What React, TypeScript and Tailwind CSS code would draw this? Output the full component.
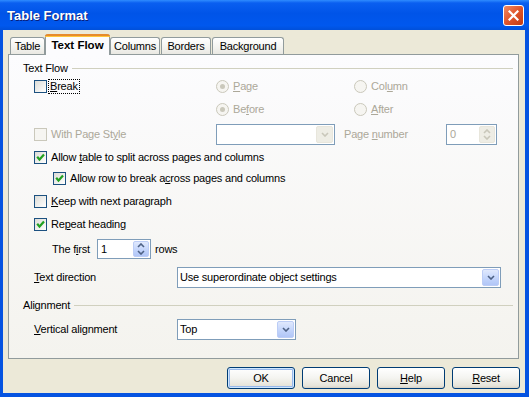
import React from 'react';

function U({ children }: { children: React.ReactNode }) {
  return <span className="underline underline-offset-[1px]">{children}</span>;
}

function Check({ checked, disabled }: { checked?: boolean; disabled?: boolean }) {
  return (
    <span
      className={`w-[13px] h-[13px] border flex items-center justify-center shrink-0 ${
        disabled ? 'border-[#cac8bb] bg-[#f6f5f1]' : 'border-[#1c5180] bg-[linear-gradient(135deg,#dcdcd7,#ffffff)]'
      }`}
    >
      {checked && (
        <svg width="9" height="9" viewBox="0 0 9 9">
          <path d="M1.2 3.8 L3.5 6.6 L8 1.6" stroke="#21a121" strokeWidth="2.2" fill="none" />
        </svg>
      )}
    </span>
  );
}

function Radio({ checked }: { checked?: boolean }) {
  return (
    <span className="w-[13px] h-[13px] rounded-full border border-[#cac8bb] bg-[#f6f5f1] flex items-center justify-center shrink-0">
      {checked && <span className="w-[5px] h-[5px] rounded-full bg-[#cac8bb]" />}
    </span>
  );
}

function Arrow({ dir, color }: { dir: 'down' | 'up'; color: string }) {
  const d = dir === 'down' ? 'M1 1 L4 4 L7 1' : 'M1 4 L4 1 L7 4';
  return (
    <svg width="8" height="5" viewBox="0 0 8 5">
      <path d={d} stroke={color} strokeWidth="1.6" fill="none" />
    </svg>
  );
}

function DropBtn({ disabled }: { disabled?: boolean }) {
  return (
    <span
      className={`w-[17px] h-[17px] rounded-[2px] border flex items-center justify-center shrink-0 ${
        disabled
          ? 'border-[#e8e6dc] bg-[#eeede5]'
          : 'border-[#bccdf6] bg-[linear-gradient(to_bottom,#e0e9fd,#c1d3fb_60%,#b1c6f7)]'
      }`}
    >
      <Arrow dir="down" color={disabled ? '#c9c7ba' : '#4d6185'} />
    </span>
  );
}

function Combo({ text, className, disabled }: { text?: string; className: string; disabled?: boolean }) {
  return (
    <div className={`h-[21px] border border-[#7f9db9] bg-white flex items-center p-[1px] shrink-0 ${className}`}>
      <span className="flex-1 pl-[1px] text-black leading-none">{text}</span>
      <DropBtn disabled={disabled} />
    </div>
  );
}

function Spin({ value, className, disabled, h }: { value: string; className: string; disabled?: boolean; h: string }) {
  return (
    <div className={`border border-[#7f9db9] bg-white flex items-center p-[1px] shrink-0 ${h} ${className}`}>
      <span className={`flex-1 pl-[2px] leading-none ${disabled ? 'text-[#aca899]' : 'text-black'}`}>{value}</span>
      <span
        className={`w-[16px] h-full rounded-[2px] border flex flex-col items-center justify-evenly shrink-0 ${
          disabled
            ? 'border-[#e8e6dc] bg-[#eeede5]'
            : 'border-[#bccdf6] bg-[linear-gradient(to_bottom,#e0e9fd,#c1d3fb_60%,#b1c6f7)]'
        }`}
      >
        <Arrow dir="up" color={disabled ? '#c9c7ba' : '#4d6185'} />
        <Arrow dir="down" color={disabled ? '#c9c7ba' : '#4d6185'} />
      </span>
    </div>
  );
}

function Tab({ label, active, className }: { label: string; active?: boolean; className: string }) {
  if (active)
    return (
      <div
        className={`h-[21px] -mb-[1px] z-10 relative border-x border-[#919b9c] bg-[#fcfcfe] flex flex-col rounded-t-[3px] ${className}`}
      >
        <div className="h-[3px] -mx-[1px] rounded-t-[3px] bg-[#e68b2c] border-t border-[#e68b2c] shadow-[inset_0_-1px_0_#ffc73c]" />
        <div className="flex-1 flex items-center justify-center font-bold text-[11.5px] tracking-normal text-black">{label}</div>
      </div>
    );
  return (
    <div
      className={`h-[17px] border-x border-t border-[#919b9c] rounded-t-[3px] bg-[linear-gradient(to_bottom,#ffffff,#f3f3ef_60%,#e9e8e2)] flex items-center justify-center text-black ${className}`}
    >
      {label}
    </div>
  );
}

function Heading({ label }: { label: string }) {
  return (
    <div className="h-[14px] flex items-center pl-[14px] pr-[5px]">
      <span className="text-black">{label}</span>
      <span className="flex-1 h-px bg-[#d0d0bf] ml-[4px]" />
    </div>
  );
}

function Btn({ children, def }: { children: React.ReactNode; def?: boolean }) {
  return (
    <div
      className={`w-[68px] h-[22px] rounded-[3px] border border-[#003c74] flex items-center justify-center text-black bg-[linear-gradient(to_bottom,#ffffff,#f4f4f0_50%,#e6e3d9_90%,#d6d0c5)] ${
        def ? 'shadow-[inset_0_0_0_1px_#cee7ff,inset_0_0_0_2px_#98b8ea]' : ''
      }`}
    >
      {children}
    </div>
  );
}

export default function App() {
  const dis = 'text-[#aca899]';
  return (
    <div className="w-[529px] h-[397px] bg-[#0553e1] flex flex-col font-['Tahoma','Liberation_Sans',Arial,sans-serif] text-[11px] tracking-[-0.2px] leading-none select-none">
      {/* Title bar */}
      <div className="h-[30px] shrink-0 flex items-center justify-between pl-[7px] pr-[5px] bg-[linear-gradient(to_bottom,#2f8cff_0%,#0a5ff0_10%,#0054e8_45%,#0058ee_85%,#0050da_100%)]">
        <span className="text-white font-bold text-[13px] tracking-normal [text-shadow:1px_1px_0_#0a1e7a]">Table Format</span>
        <div className="w-[21px] h-[21px] rounded-[3px] border border-white bg-[linear-gradient(135deg,#f08a64,#e0552b_50%,#c23a12)] flex items-center justify-center">
          <svg width="11" height="11" viewBox="0 0 11 11">
            <path d="M1.5 1.5 L9.5 9.5 M9.5 1.5 L1.5 9.5" stroke="white" strokeWidth="2.2" strokeLinecap="square" />
          </svg>
        </div>
      </div>

      {/* Body */}
      <div className="flex-1 ml-[3px] mr-[4px] mb-[4px] bg-[#ece9d8] flex flex-col pt-[4px]">
        {/* Tabs */}
        <div className="h-[20px] flex items-end pl-[7px]">
          <Tab label="Table" className="w-[35px]" />
          <Tab label="Text Flow" active className="w-[65px]" />
          <Tab label="Columns" className="w-[50px]" />
          <Tab label="Borders" className="w-[50px] ml-[1px]" />
          <Tab label="Background" className="w-[72px] ml-[1px]" />
        </div>

        {/* Panel */}
        <div className="ml-[5px] w-[511px] h-[305px] border border-[#919b9c] bg-[linear-gradient(to_bottom,#fcfcfe,#f4f3ee)] flex flex-col">
          <div className="mt-[6px]">
            <Heading label="Text Flow" />
          </div>

          {/* Break row */}
          <div className="mt-[4px] h-[14px] flex items-center pl-[25px]">
            <div className="w-[182px] flex items-center">
              <Check />
              <span className="ml-[2px] px-[1px] py-[1px] outline-1 outline-dotted outline-black text-black">
                <U>B</U>reak
              </span>
            </div>
            <div className="w-[138px] flex items-center">
              <Radio checked />
              <span className={`ml-[4px] ${dis}`}>
                <U>P</U>age
              </span>
            </div>
            <div className="flex items-center">
              <Radio />
              <span className={`ml-[4px] ${dis}`}>
                Col<U>u</U>mn
              </span>
            </div>
          </div>

          {/* Before row */}
          <div className="mt-[9px] h-[14px] flex items-center pl-[207px]">
            <div className="w-[138px] flex items-center">
              <Radio checked />
              <span className={`ml-[4px] ${dis}`}>
                Be<U>f</U>ore
              </span>
            </div>
            <div className="flex items-center">
              <Radio />
              <span className={`ml-[4px] ${dis}`}>
                <U>A</U>fter
              </span>
            </div>
          </div>

          {/* With page style */}
          <div className="mt-[8px] h-[21px] flex items-center pl-[25px]">
            <div className="w-[182px] flex items-center">
              <Check disabled />
              <span className={`ml-[4px] ${dis}`}>
                With Page St<U>y</U>le
              </span>
            </div>
            <Combo className="w-[119px]" disabled />
            <span className={`ml-[9px] w-[102px] ${dis}`}>
              Page <U>n</U>umber
            </span>
            <Spin value="0" disabled className="w-[51px]" h="h-[21px]" />
          </div>

          {/* Allow table */}
          <div className="mt-[5px] h-[14px] flex items-center pl-[25px]">
            <Check checked />
            <span className="ml-[4px] text-black">
              Allow <U>t</U>able to split across pages and columns
            </span>
          </div>

          {/* Allow row */}
          <div className="mt-[7px] h-[14px] flex items-center pl-[44px]">
            <Check checked />
            <span className="ml-[4px] text-black">
              Allow row to break a<U>c</U>ross pages and columns
            </span>
          </div>

          {/* Keep */}
          <div className="mt-[9px] h-[14px] flex items-center pl-[25px]">
            <Check />
            <span className="ml-[4px] text-black">
              <U>K</U>eep with next paragraph
            </span>
          </div>

          {/* Repeat */}
          <div className="mt-[9px] h-[14px] flex items-center pl-[25px]">
            <Check checked />
            <span className="ml-[4px] text-black">
              Re<U>p</U>eat heading
            </span>
          </div>

          {/* The first */}
          <div className="mt-[8px] h-[20px] flex items-center pl-[43px]">
            <span className="w-[45px] text-black">
              The f<U>i</U>rst
            </span>
            <Spin value="1" className="w-[54px]" h="h-[20px]" />
            <span className="ml-[4px] text-black">rows</span>
          </div>

          {/* Text direction */}
          <div className="mt-[8px] h-[21px] flex items-center pl-[25px]">
            <span className="w-[143px] text-black">
              <U>T</U>ext direction
            </span>
            <Combo className="w-[324px]" text="Use superordinate object settings" />
          </div>

          <div className="mt-[10px]">
            <Heading label="Alignment" />
          </div>

          {/* Vertical alignment */}
          <div className="mt-[7px] h-[21px] flex items-center pl-[25px]">
            <span className="w-[143px] text-black">
              <U>V</U>ertical alignment
            </span>
            <Combo className="w-[119px]" text="Top" />
          </div>
        </div>

        {/* Buttons */}
        <div className="mt-[8px] flex justify-end gap-[7px] pr-[5px]">
          <Btn def>OK</Btn>
          <Btn>Cancel</Btn>
          <Btn>
            <U>H</U>elp
          </Btn>
          <Btn>
            <U>R</U>eset
          </Btn>
        </div>
      </div>
    </div>
  );
}
